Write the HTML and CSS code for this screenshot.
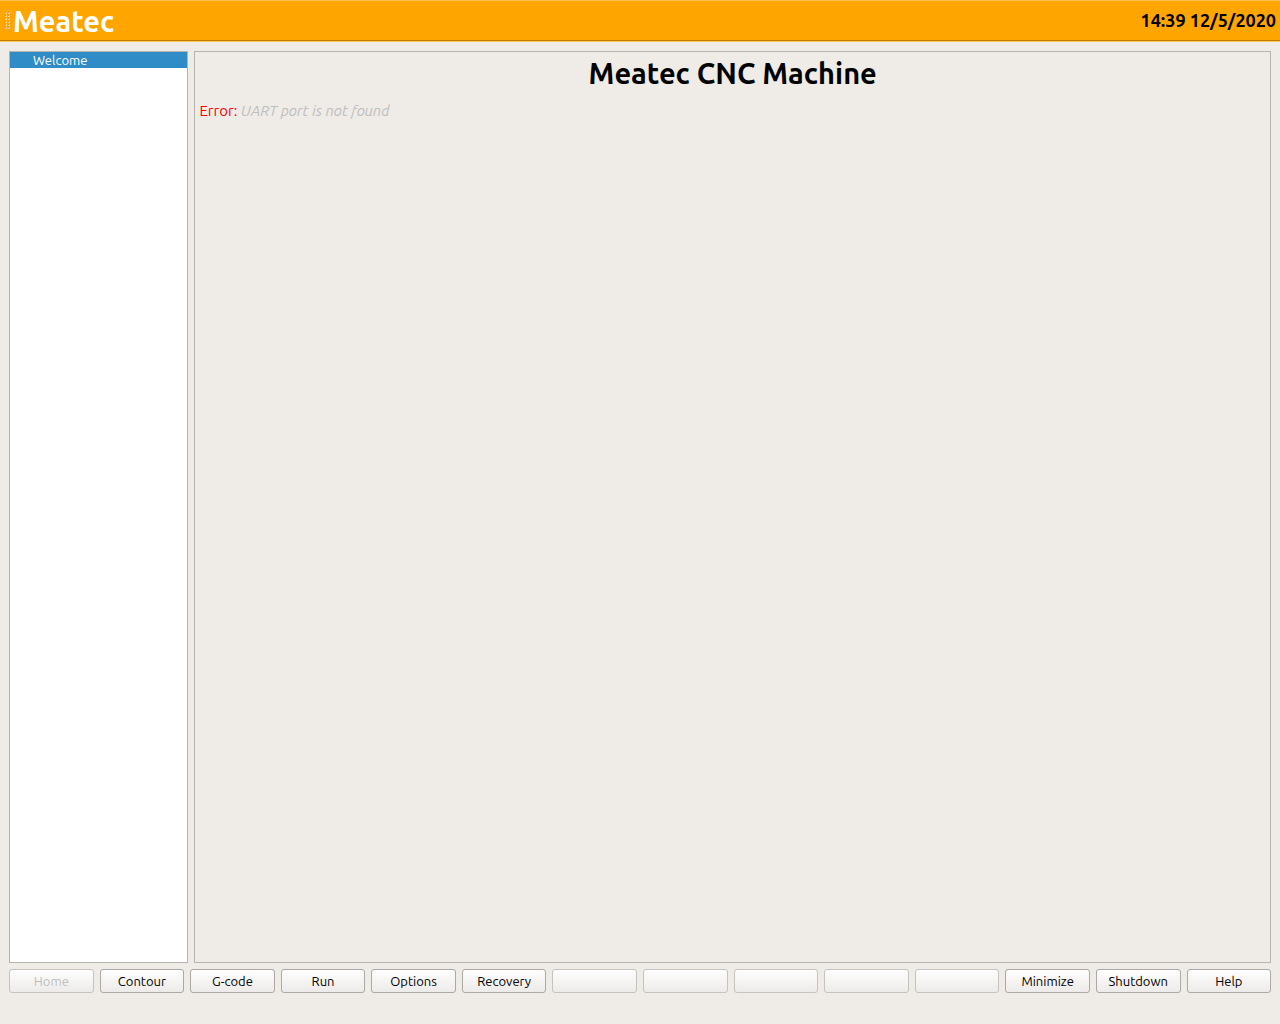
FILE: index.html
```
<!DOCTYPE html>
<html lang="en">
<head>
<meta charset="utf-8">
<meta name="viewport" content="width=device-width, initial-scale=1">
<title>Meatec CNC Machine</title>
<link rel="stylesheet" href="styles.css">
</head>
<body>
<header class="toolbar">
  <span class="toolbar-handle"></span>
  <span class="brand">Meatec</span>
  <time class="clock" datetime="2020-05-12T14:39">14:39 12/5/2020</time>
</header>
<main class="workspace">
  <nav class="sidebar">
    <a class="sidebar-item" href="#welcome" aria-current="page">Welcome</a>
  </nav>
  <section class="page" id="welcome">
    <h1 class="page-title">Meatec CNC Machine</h1>
    <p class="message"><span class="message-label">Error:</span> <em class="message-text">UART port is not found</em></p>
  </section>
</main>
<footer class="actions">
  <button class="action" type="button" disabled>Home</button>
  <button class="action" type="button">Contour</button>
  <button class="action" type="button">G-code</button>
  <button class="action" type="button">Run</button>
  <button class="action" type="button">Options</button>
  <button class="action" type="button">Recovery</button>
  <button class="action" type="button" disabled></button>
  <button class="action" type="button" disabled></button>
  <button class="action" type="button" disabled></button>
  <button class="action" type="button" disabled></button>
  <button class="action" type="button" disabled></button>
  <button class="action" type="button">Minimize</button>
  <button class="action" type="button">Shutdown</button>
  <button class="action" type="button">Help</button>
</footer>
</body>
</html>
```
FILE: styles.css
```
* {
  box-sizing: border-box;
}

body {
  display: flex;
  flex-direction: column;
  min-height: 100vh;
  margin: 0;
  background: #efebe7;
  color: #000;
  font: 13px/16px Ubuntu, "Noto Sans", sans-serif;
}

.toolbar {
  display: flex;
  align-items: center;
  height: 42px;
  padding: 0 4px 0 5px;
  border-top: 1px solid #ffc04d;
  border-bottom: 1px solid #ffc960;
  background: #ffa500;
  box-shadow: inset 0 -1px #bf7c00;
}

/* Two columns of raised 2px dots, repeated every 3px */
.toolbar-handle {
  width: 6px;
  height: 18px;
  background: conic-gradient(at 1px 1px, #ffd27a 75%, #c8953a 0) 0 0 / 3px 3px;
  mask: conic-gradient(from 270deg at 2px 2px, #000 25%, transparent 0) 0 0 / 3px 3px;
}

.brand {
  margin-left: 2px;
  color: #fff;
  font-size: 29px;
  font-weight: bold;
  line-height: 40px;
}

.clock {
  margin-left: auto;
  padding-bottom: 2px;
  font-size: 18px;
  font-weight: bold;
}

.workspace {
  display: grid;
  flex: 1;
  grid-template-columns: 1fr 6fr;
  gap: 6px;
  padding: 9px 9px 0;
}

.sidebar {
  border: 1px solid #b6b3b0;
  background: #fff;
}

.sidebar-item {
  display: block;
  padding-left: 23px;
  background: #308cc6;
  color: #fff;
  text-decoration: none;
}

.page {
  padding: 4px;
  border: 1px solid #b6b3b0;
}

.page-title {
  margin: 0 0 12px;
  font-size: 29px;
  line-height: 34px;
  text-align: center;
}

.message {
  margin: 0;
  font-size: 15px;
  line-height: 18px;
}

.message-label {
  color: #f00;
}

.message-text {
  color: #bebebe;
}

.actions {
  display: flex;
  gap: 6px;
  padding: 6px 9px 31px;
}

.action {
  flex: 1 1 0;
  min-width: 0;
  height: 24px;
  padding: 0;
  border: 1px solid #aba8a6;
  border-radius: 3px;
  background: linear-gradient(#fefefe, #edebe9);
  color: #000;
  font: inherit;
}

.action:disabled {
  border-color: #c5c2bf;
  color: #bebebe;
}
```
